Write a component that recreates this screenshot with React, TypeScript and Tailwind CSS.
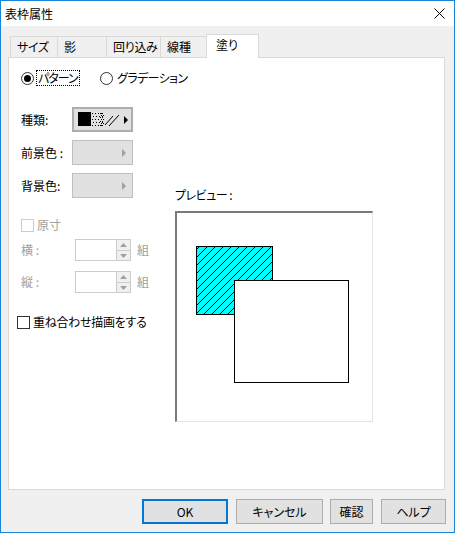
import React from "react";

const F = "[font-family:'Noto_Sans_CJK_JP','Noto_Sans',sans-serif] [font-feature-settings:'palt']";

function Tab({ label, w, active }: { label: string; w: number; active?: boolean }) {
  if (active) {
    return (
      <div
        className="relative z-10 -mb-px -ml-[2px] h-[24px] border border-b-0 border-[#d9d9d9] bg-white pl-[9px] text-[12px] leading-[20px] text-black"
        style={{ width: w }}
      >
        {label}
      </div>
    );
  }
  return (
    <div
      className="h-[21px] whitespace-nowrap border-l border-t border-[#d9d9d9] bg-[#f0f0f0] pl-[6px] text-[12px] leading-[20px] tracking-[-0.3px] text-black"
      style={{ width: w }}
    >
      {label}
    </div>
  );
}

function Arrow({ color }: { color: string }) {
  return (
    <svg width="5" height="8" viewBox="0 0 5 8">
      <path d="M0 0 L4 4 L0 8 Z" fill={color} />
    </svg>
  );
}

function PatternButton() {
  const dots: React.ReactNode[] = [];
  for (let r = 0; r < 5; r++) {
    for (let c = 0; c < 4; c++) {
      dots.push(<rect key={`a${r}-${c}`} x={14 + c * 3 + (r % 2)} y={1 + r * 3} width="1" height="1" fill="#000" />);
    }
  }
  for (let r = 0; r < 7; r++) {
    for (let c = 0; c < 2; c++) {
      dots.push(<rect key={`b${r}-${c}`} x={22 + c * 2 + (r % 2)} y={1 + r * 2} width="1" height="1" fill="#000" />);
    }
  }
  return (
    <div className="flex h-[25px] w-[61px] items-center border-2 border-[#adadad] bg-[#e1e1e1] pl-[4px]">
      <svg width="46" height="15" viewBox="0 0 46 15">
        <rect x="0" y="0" width="13" height="14" fill="#000" />
        {dots}
        <path d="M27 13 L35 4 M31 14 L41 3" stroke="#000" strokeWidth="1" />
      </svg>
      <div className="flex items-center">
        <Arrow color="#000" />
      </div>
    </div>
  );
}

function DisabledButton() {
  return (
    <div className="flex h-[25px] w-[61px] items-center justify-end border border-[#bfbfbf] bg-[#e1e1e1] pr-[5px]">
      <Arrow color="#a0a0a0" />
    </div>
  );
}

function Spin() {
  return (
    <div className="flex items-center">
      <div className="h-[22px] w-[42px] border border-[#cccccc] bg-white" />
      <div className="flex h-[22px] w-[14px] flex-col">
        <div className="flex h-[11px] items-center justify-center border border-b-0 border-l-0 border-[#cccccc] bg-[#f0f0f0]">
          <svg width="7" height="4" viewBox="0 0 7 4">
            <path d="M0 4 L3.5 0 L7 4 Z" fill="#a0a0a0" />
          </svg>
        </div>
        <div className="flex h-[11px] items-center justify-center border border-l-0 border-[#cccccc] bg-[#f0f0f0]">
          <svg width="7" height="4" viewBox="0 0 7 4">
            <path d="M0 0 L3.5 4 L7 0 Z" fill="#a0a0a0" />
          </svg>
        </div>
      </div>
      <span className="ml-[6px] text-[12px] text-[#a0a0a0]">組</span>
    </div>
  );
}

function Btn({ label, w, primary, ml }: { label: string; w: number; primary?: boolean; ml: number }) {
  return (
    <div
      className={
        primary
          ? "flex h-[25px] items-center justify-center border-2 border-[#0078d7] bg-[#e1e1e1] text-[12px] text-black"
          : "flex h-[25px] items-center justify-center border border-[#adadad] bg-[#e1e1e1] text-[12px] text-black"
      }
      style={{ width: w, marginLeft: ml }}
    >
      {label}
    </div>
  );
}

export default function App() {
  return (
    <div className={`${F} flex h-[533px] w-[455px] flex-col border border-[#1883d7] bg-[#f0f0f0] text-black`}>
      {/* title bar */}
      <div className="flex h-[25px] items-center justify-between bg-white pl-[4px] pr-[9px]">
        <span className="text-[12px] leading-[16px]">表枠属性</span>
        <svg width="11" height="11" viewBox="0 0 11 11">
          <path d="M0.5 0.5 L10.5 10.5 M10.5 0.5 L0.5 10.5" stroke="#000" strokeWidth="1" />
        </svg>
      </div>

      {/* tabs */}
      <div className="ml-[9px] mt-[8px] flex h-[23px] items-end">
        <Tab label="サイズ" w={47} />
        <Tab label="影" w={49} />
        <Tab label="回り込み" w={54} />
        <div className="h-[21px] w-[48px] border-l border-r border-t border-[#d9d9d9] bg-[#f0f0f0] pl-[6px] text-[12px] leading-[20px]">
          線種
        </div>
        <Tab label="塗り" w={53} active />
      </div>

      {/* panel */}
      <div className="ml-[7px] h-[433px] w-[437px] border border-[#d9d9d9] bg-white pl-[12px] pt-[12px]">
        {/* radios */}
        <div className="flex h-[16px] items-center text-[12px]">
          <div className="flex w-[79px] shrink-0 items-center">
            <div className="flex h-[13px] w-[13px] shrink-0 items-center justify-center rounded-full border border-[#333333] bg-white">
              <div className="h-[7px] w-[7px] rounded-full bg-black" />
            </div>
            <span className="ml-[2px] shrink-0 whitespace-nowrap border border-dotted border-black px-[1px] leading-[14px] tracking-[-1px]">
              パターン
            </span>
          </div>
          <div className="h-[13px] w-[13px] shrink-0 rounded-full border border-[#333333] bg-white" />
          <span className="ml-[4px] tracking-[-0.6px]">グラデーション</span>
        </div>

        <div className="mt-[21px] flex items-start">
          {/* left column */}
          <div className="flex w-[154px] flex-col text-[12px]">
            <div className="flex h-[25px] items-center">
              <span className="w-[51px]">種類:</span>
              <PatternButton />
            </div>
            <div className="mt-[8px] flex h-[25px] items-center">
              <span className="w-[51px]">前景色 :</span>
              <DisabledButton />
            </div>
            <div className="mt-[8px] flex h-[25px] items-center">
              <span className="w-[51px]">背景色:</span>
              <DisabledButton />
            </div>

            <div className="mt-[19px] flex h-[16px] items-center text-[#a0a0a0]">
              <div className="h-[13px] w-[13px] border border-[#cccccc] bg-white" />
              <span className="ml-[3px]">原寸</span>
            </div>
            <div className="mt-[6px] flex h-[22px] items-center">
              <span className="w-[54px] text-[#a0a0a0]">横 :</span>
              <Spin />
            </div>
            <div className="mt-[10px] flex h-[22px] items-center">
              <span className="w-[54px] text-[#a0a0a0]">縦 :</span>
              <Spin />
            </div>

            <div className="-ml-[4px] mt-[21px] flex h-[16px] items-center">
              <div className="h-[13px] w-[13px] border border-[#333333] bg-white" />
              <span className="ml-[3px] whitespace-nowrap tracking-[-0.3px]">重ね合わせ描画をする</span>
            </div>
          </div>

          {/* preview */}
          <div className="mt-[80px] flex flex-col">
            <span className="h-[16px] text-[12px] leading-[16px] tracking-[-0.5px]">プレビュー :</span>
            <div className="mt-[8px] h-[211px] w-[198px] border-l-2 border-t-2 border-l-[#7a7a7a] border-t-[#7a7a7a] border-r border-b border-r-[#e3e3e3] border-b-[#e3e3e3] bg-white">
              <svg width="195" height="208" viewBox="0 0 195 208">
                <defs>
                  <pattern id="hatch" width="8" height="8" patternUnits="userSpaceOnUse">
                    <path d="M-1 1 L1 -1 M0 8 L8 0 M7 9 L9 7" stroke="#000" strokeWidth="1" />
                  </pattern>
                </defs>
                <rect x="19.5" y="33.5" width="76" height="68" fill="#00ffff" />
                <rect x="19.5" y="33.5" width="76" height="68" fill="url(#hatch)" stroke="#000" strokeWidth="1" />
                <rect x="57.5" y="67.5" width="114" height="102" fill="#fff" stroke="#000" strokeWidth="1" />
              </svg>
            </div>
          </div>
        </div>
      </div>

      {/* buttons */}
      <div className="mt-[9px] flex">
        <Btn label="OK" w={86} primary ml={141} />
        <Btn label="キャンセル" w={87} ml={8} />
        <Btn label="確認" w={43} ml={7} />
        <Btn label="ヘルプ" w={65} ml={8} />
      </div>
    </div>
  );
}
